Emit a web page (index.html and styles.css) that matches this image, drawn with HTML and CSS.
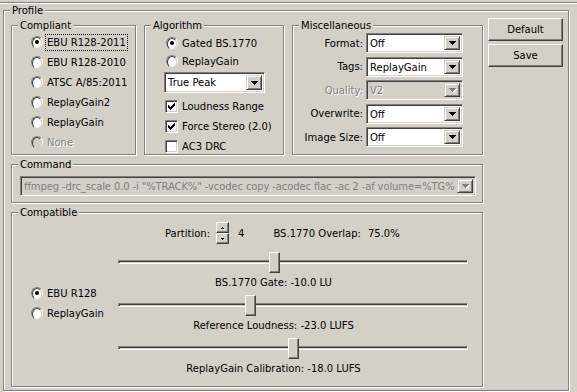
FILE: index.html
```html
<!DOCTYPE html>
<html lang="en">
<head>
  <title>Profile</title>
  <meta name="viewport" content="width=device-width, initial-scale=1">
  <link rel="stylesheet" href="styles.css">
</head>
<body>
  <div class="page">
    <fieldset class="group profile">
      <legend>Profile</legend>
      <div class="profile-body">
        <div class="main">

          <div class="top-row">
            <fieldset class="group compliant">
              <legend>Compliant</legend>
              <div class="compliant-list">
                <div class="opt"><span class="radio on"></span><span class="focus">EBU R128-2011</span></div>
                <div class="opt"><span class="radio"></span>EBU R128-2010</div>
                <div class="opt"><span class="radio"></span>ATSC A/85:2011</div>
                <div class="opt"><span class="radio"></span>ReplayGain2</div>
                <div class="opt"><span class="radio"></span>ReplayGain</div>
                <div class="opt disabled"><span class="radio"></span>None</div>
              </div>
            </fieldset>

            <fieldset class="group algorithm">
              <legend>Algorithm</legend>
              <div class="algo-body">
                <div class="opt short"><span class="radio on"></span>Gated BS.1770</div>
                <div class="opt short"><span class="radio"></span>ReplayGain</div>
                <div class="combo peak">
                  <span class="combo-text">True Peak</span>
                  <span class="drop"><svg width="7" height="4" viewBox="0 0 7 4"><path d="M0 0h7v1h-1v1h-1v1h-1v1h-1v-1h-1v-1h-1v-1h-1z"/></svg></span>
                </div>
                <div class="opt"><span class="check"><svg width="7" height="7" viewBox="0 0 7 7"><path d="M6 0h1v3h-1v1h-1v1h-1v1h-1v1h-1v-1h-1v-1h-1v-3h1v1h1v1h1v-1h1v-1h1v-1h1z"/></svg></span>Loudness Range</div>
                <div class="opt"><span class="check"><svg width="7" height="7" viewBox="0 0 7 7"><path d="M6 0h1v3h-1v1h-1v1h-1v1h-1v1h-1v-1h-1v-1h-1v-3h1v1h1v1h1v-1h1v-1h1v-1h1z"/></svg></span>Force Stereo (2.0)</div>
                <div class="opt"><span class="check"></span>AC3 DRC</div>
              </div>
            </fieldset>

            <fieldset class="group misc">
              <legend>Miscellaneous</legend>
              <div class="misc-grid">
                <span class="field-label">Format:</span>
                <div class="combo">
                  <span class="combo-text">Off</span>
                  <span class="drop"><svg width="7" height="4" viewBox="0 0 7 4"><path d="M0 0h7v1h-1v1h-1v1h-1v1h-1v-1h-1v-1h-1v-1h-1z"/></svg></span>
                </div>
                <span class="field-label">Tags:</span>
                <div class="combo">
                  <span class="combo-text">ReplayGain</span>
                  <span class="drop"><svg width="7" height="4" viewBox="0 0 7 4"><path d="M0 0h7v1h-1v1h-1v1h-1v1h-1v-1h-1v-1h-1v-1h-1z"/></svg></span>
                </div>
                <span class="field-label disabled">Quality:</span>
                <div class="combo off">
                  <span class="combo-text">V2</span>
                  <span class="drop"><svg width="7" height="4" viewBox="0 0 7 4"><path d="M0 0h7v1h-1v1h-1v1h-1v1h-1v-1h-1v-1h-1v-1h-1z"/></svg></span>
                </div>
                <span class="field-label">Overwrite:</span>
                <div class="combo">
                  <span class="combo-text">Off</span>
                  <span class="drop"><svg width="7" height="4" viewBox="0 0 7 4"><path d="M0 0h7v1h-1v1h-1v1h-1v1h-1v-1h-1v-1h-1v-1h-1z"/></svg></span>
                </div>
                <span class="field-label">Image Size:</span>
                <div class="combo">
                  <span class="combo-text">Off</span>
                  <span class="drop"><svg width="7" height="4" viewBox="0 0 7 4"><path d="M0 0h7v1h-1v1h-1v1h-1v1h-1v-1h-1v-1h-1v-1h-1z"/></svg></span>
                </div>
              </div>
            </fieldset>
          </div>

          <fieldset class="group command">
            <legend>Command</legend>
            <div class="command-body">
              <div class="combo off cmd">
                <span class="combo-text">ffmpeg -drc_scale 0.0 -i "%TRACK%" -vcodec copy -acodec flac -ac 2 -af volume=%TG%</span>
                <span class="drop"><svg width="7" height="4" viewBox="0 0 7 4"><path d="M0 0h7v1h-1v1h-1v1h-1v1h-1v-1h-1v-1h-1v-1h-1z"/></svg></span>
              </div>
            </div>
          </fieldset>

          <fieldset class="group compatible">
            <legend>Compatible</legend>
            <div class="compat-body">
              <div class="compat-modes">
                <div class="opt"><span class="radio on"></span>EBU R128</div>
                <div class="opt"><span class="radio"></span>ReplayGain</div>
              </div>
              <div class="compat-controls">
                <div class="partition">
                  <span>Partition:</span>
                  <span class="spin">
                    <span class="spin-btn"><svg width="3" height="2" viewBox="0 0 3 2"><path d="M1 0h1v1h1v1h-3v-1h1z"/></svg></span>
                    <span class="spin-btn"><svg width="3" height="2" viewBox="0 0 3 2"><path d="M0 0h3v1h-1v1h-1v-1h-1z"/></svg></span>
                  </span>
                  <span class="spin-value">4</span>
                  <span class="overlap">BS.1770 Overlap:</span>
                  <span class="overlap-value">75.0%</span>
                </div>
                <div class="slider"><div class="track"></div><div class="thumb" style="left: 151px"></div></div>
                <div class="caption">BS.1770 Gate: -10.0 LU</div>
                <div class="slider"><div class="track"></div><div class="thumb" style="left: 127px"></div></div>
                <div class="caption">Reference Loudness: -23.0 LUFS</div>
                <div class="slider"><div class="track"></div><div class="thumb" style="left: 170px"></div></div>
                <div class="caption">ReplayGain Calibration: -18.0 LUFS</div>
              </div>
            </div>
          </fieldset>

        </div>

        <div class="side">
          <button class="btn">Default</button>
          <button class="btn">Save</button>
        </div>
      </div>
    </fieldset>
  </div>
</body>
</html>
```

FILE: styles.css
```css
* {
  box-sizing: border-box;
}
html {
  font-family: "DejaVu Sans", Verdana, sans-serif;
  font-size: 10px;
}
body {
  margin: 0;
  background: #d4d0c8;
  color: #000;
  line-height: 13px;
}
.page {
  margin-top: 2px;
  border-top: 1px solid #808080;
  box-shadow: inset 0 1px #fff;
  padding: 1px 0 0 3px;
  height: 390px;
  overflow: hidden;
}

/* etched group boxes */
.group {
  margin: 0;
  padding: 0;
  min-width: 0;
  border: 1px solid #808080;
  box-shadow: inset 1px 1px #fff, 1px 1px #fff;
}
.group legend {
  margin-left: 6px;
  padding: 0 2px;
  background: #d4d0c8;
  line-height: 13px;
}
.profile {
  width: 566px;
}
.profile-body {
  display: flex;
  gap: 5px;
  padding: 1px 5px 3px 7px;
}
.main {
  width: 472px;
}
.top-row {
  display: flex;
  gap: 8px;
  margin-top: 1px;
  height: 136px;
}
.compliant { width: 125px; }
.algorithm { width: 140px; }
.misc { width: 191px; }
.command { margin-top: 3px; }
.compatible {
  margin-top: 3px;
  height: 181px;
}

/* options */
.opt {
  display: flex;
  align-items: center;
  gap: 4px;
  height: 20px;
  white-space: nowrap;
}
.opt.short {
  height: 18px;
}
.disabled {
  color: #808080;
  text-shadow: 1px 1px #fff;
}
.focus {
  outline: 1px dotted #000;
  padding: 1px 1px;
  margin-left: -1px;
}
.radio {
  position: relative;
  flex: none;
  width: 12px;
  height: 12px;
  border-radius: 50%;
  border: 1px solid;
  border-color: #808080 #fff #fff #808080;
}
.radio::before {
  content: "";
  display: block;
  height: 10px;
  border-radius: 50%;
  border: 1px solid;
  border-color: #404040 #d4d0c8 #d4d0c8 #404040;
  background: #fff;
}
.disabled .radio::before {
  background: #d4d0c8;
}
.radio.on::after {
  content: "";
  position: absolute;
  left: 3px;
  top: 3px;
  width: 4px;
  height: 4px;
  border-radius: 50%;
  background: #000;
}
.check {
  flex: none;
  display: flex;
  align-items: center;
  justify-content: center;
  width: 13px;
  height: 13px;
  border: 1px solid;
  border-color: #808080 #fff #fff #808080;
  box-shadow: inset 1px 1px #404040, inset -1px -1px #d4d0c8;
  background: #fff;
}
.check svg {
  display: block;
  shape-rendering: crispEdges;
}

.compliant-list {
  padding-left: 19px;
}
.algo-body {
  padding: 2px 0 0 20px;
}
.algo-body .opt.short .radio {
  margin-left: 1px;
}

/* combo boxes */
.combo {
  display: flex;
  align-items: stretch;
  height: 20px;
  padding: 2px;
  border: 1px solid;
  border-color: #808080 #fff #fff #808080;
  box-shadow: inset 1px 1px #404040, inset -1px -1px #d4d0c8;
  background: #fff;
}
.combo-text {
  flex: 1;
  padding-left: 1px;
  line-height: 16px;
  white-space: nowrap;
  overflow: hidden;
}
.drop {
  flex: none;
  display: flex;
  align-items: center;
  justify-content: center;
  width: 16px;
  border: 1px solid;
  border-color: #d4d0c8 #404040 #404040 #d4d0c8;
  box-shadow: inset 1px 1px #fff, inset -1px -1px #808080;
  background: #d4d0c8;
}
.drop svg {
  display: block;
  shape-rendering: crispEdges;
}
.combo.off {
  background: #d4d0c8;
}
.combo.off .combo-text {
  color: #808080;
  text-shadow: 1px 1px #fff;
}
.combo.off .drop path {
  fill: #808080;
}
.combo.off .drop svg {
  filter: drop-shadow(1px 1px 0 #fff);
}
.combo.cmd .combo-text {
  text-shadow: none;
  letter-spacing: -0.12px;
}
.peak {
  width: 101px;
  height: 21px;
  margin: 2px 0 3px -1px;
}

/* miscellaneous */
.misc-grid {
  display: grid;
  grid-template-columns: 1fr 97px;
  column-gap: 3px;
  row-gap: 3.5px;
  align-items: center;
  padding: 1px 19px 0 0;
}
.field-label {
  text-align: right;
  white-space: nowrap;
}

/* command */
.command-body {
  padding: 5px 6px 6px 8px;
}

/* compatible */
.compat-body {
  display: flex;
  padding-top: 3px;
}
.compat-modes {
  width: 106px;
  padding: 61px 0 0 19px;
}
.compat-controls {
  width: 350px;
}
.partition {
  display: flex;
  align-items: center;
  height: 22px;
  padding-left: 47px;
  margin-bottom: 8px;
  white-space: nowrap;
}
.spin {
  display: flex;
  flex-direction: column;
  width: 13px;
  margin-left: 6px;
}
.spin-btn {
  display: flex;
  align-items: center;
  justify-content: center;
  height: 11px;
  border: 1px solid;
  border-color: #fff #404040 #404040 #fff;
  box-shadow: inset -1px -1px #808080;
  background: #d4d0c8;
}
.spin-btn svg {
  display: block;
  shape-rendering: crispEdges;
}
.spin-value {
  margin-left: 9px;
}
.overlap {
  margin-left: 29px;
}
.overlap-value {
  margin-left: 7px;
}
.slider {
  position: relative;
  height: 21px;
}
.track {
  position: relative;
  top: 8px;
  height: 4px;
  border: 1px solid;
  border-color: #808080 #fff #fff #808080;
  box-shadow: inset 1px 1px #404040;
}
.thumb {
  position: absolute;
  top: 0;
  width: 11px;
  height: 21px;
  border: 1px solid;
  border-color: #fff #404040 #404040 #fff;
  box-shadow: inset -1px -1px #808080;
  background: #d4d0c8;
}
.caption {
  height: 13px;
  margin: 3px 0 6px;
  padding-right: 39px;
  text-align: center;
  white-space: nowrap;
}

/* buttons */
.side {
  display: flex;
  flex-direction: column;
  gap: 3px;
}
.btn {
  width: 75px;
  height: 23px;
  padding: 0;
  font: inherit;
  color: #000;
  background: #d4d0c8;
  border: 1px solid;
  border-color: #fff #404040 #404040 #fff;
  box-shadow: inset -1px -1px #808080;
  border-radius: 0;
}
```
